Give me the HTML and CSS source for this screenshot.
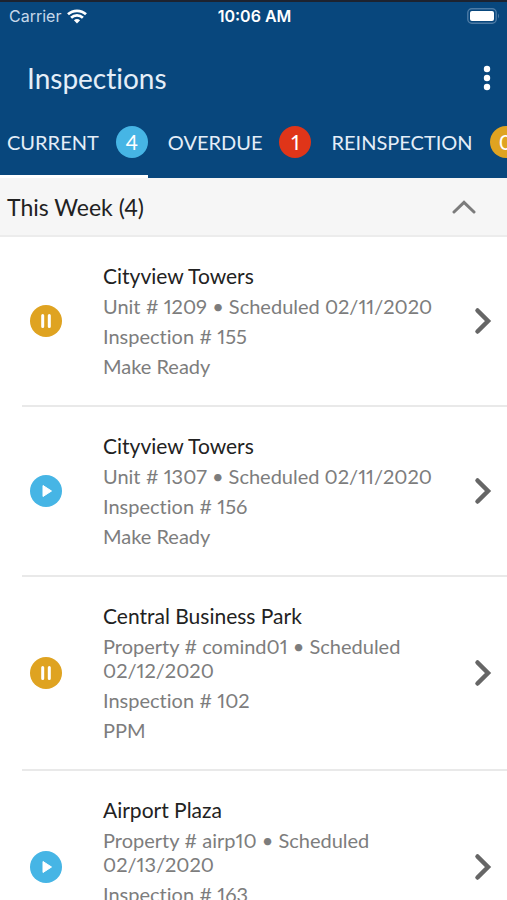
FILE: index.html
```html
<!DOCTYPE html>
<html lang="en">
<head>
<meta charset="utf-8">
<meta name="viewport" content="width=device-width, initial-scale=1">
<title>Inspections</title>
<link rel="stylesheet" href="styles.css">
</head>
<body>
<header class="header">
  <div class="status">
    <span class="carrier">Carrier
      <svg width="20" height="15" viewBox="0 0 20 15" fill="none" stroke="#fff" stroke-width="2.7" aria-hidden="true"><path d="M1 5.3C6 .6 14 .6 19 5.3M4.1 8.8C7.4 5.6 12.6 5.6 15.9 8.8"/><path d="M10 14.4 6.9 11.3Q10 8.8 13.1 11.3Z" fill="#fff" stroke="none"/></svg>
    </span>
    <time class="clock">10:06 AM</time>
    <svg class="battery" width="33" height="16" viewBox="0 0 33 16" aria-hidden="true"><rect x=".8" y=".8" width="28.4" height="14.4" rx="4" fill="none" stroke="#4d7ba5" stroke-width="1.4"/><rect x="3" y="3" width="24" height="10" rx="2" fill="#fff"/><path d="M31 5.5Q33 8 31 10.500Z" fill="#4d7ba5"/></svg>
  </div>
  <div class="titlebar">
    <h1 class="title">Inspections</h1>
    <button class="menu" type="button" aria-label="More options"><svg width="8" height="26" viewBox="0 0 8 26" fill="#fff"><circle cx="4" cy="4" r="3.200"/><circle cx="4" cy="13" r="3.200"/><circle cx="4" cy="22" r="3.200"/></svg></button>
  </div>
  <nav class="tabs">
    <a class="tab active" href="#current">CURRENT <span class="badge blue">4</span></a>
    <a class="tab" href="#overdue">OVERDUE <span class="badge red">1</span></a>
    <a class="tab" href="#reinspection">REINSPECTION <span class="badge amber">0</span></a>
  </nav>
</header>
<main>
  <button class="group" type="button" aria-expanded="true">This Week (4)
    <svg width="24" height="14" viewBox="0 0 24 14" fill="none" stroke="#7c7c7c" stroke-width="3" stroke-linecap="round" aria-hidden="true"><path d="M2 12 12 2.300 22 12"/></svg>
  </button>
  <ul class="list">
    <li><a class="row" href="#155">
      <svg class="state" viewBox="0 0 32 32" aria-hidden="true"><circle cx="16" cy="16" r="16" fill="#dfa321"/><path d="M12.700 10.500v11M19.300 10.500v11" stroke="#fff" stroke-width="3" stroke-linecap="round"/></svg>
      <div class="info"><h2>Cityview Towers</h2><p>Unit # 1209 • Scheduled 02/11/2020</p><p>Inspection # 155</p><p>Make Ready</p></div>
      <svg class="next" viewBox="0 0 18 28" aria-hidden="true"><path d="M3.500 3.500 14 14 3.500 24.500"/></svg>
    </a></li>
    <li><a class="row" href="#156">
      <svg class="state" viewBox="0 0 32 32" aria-hidden="true"><circle cx="16" cy="16" r="16" fill="#46b5e5"/><path d="M13 10.500 21.500 16 13 21.500Z" fill="#fff" stroke="#fff" stroke-linejoin="round"/></svg>
      <div class="info"><h2>Cityview Towers</h2><p>Unit # 1307 • Scheduled 02/11/2020</p><p>Inspection # 156</p><p>Make Ready</p></div>
      <svg class="next" viewBox="0 0 18 28" aria-hidden="true"><path d="M3.500 3.500 14 14 3.500 24.500"/></svg>
    </a></li>
    <li><a class="row" href="#102">
      <svg class="state" viewBox="0 0 32 32" aria-hidden="true"><circle cx="16" cy="16" r="16" fill="#dfa321"/><path d="M12.700 10.500v11M19.300 10.500v11" stroke="#fff" stroke-width="3" stroke-linecap="round"/></svg>
      <div class="info"><h2>Central Business Park</h2><p>Property # comind01 • Scheduled 02/12/2020</p><p>Inspection # 102</p><p>PPM</p></div>
      <svg class="next" viewBox="0 0 18 28" aria-hidden="true"><path d="M3.500 3.500 14 14 3.500 24.500"/></svg>
    </a></li>
    <li><a class="row" href="#163">
      <svg class="state" viewBox="0 0 32 32" aria-hidden="true"><circle cx="16" cy="16" r="16" fill="#46b5e5"/><path d="M13 10.500 21.500 16 13 21.500Z" fill="#fff" stroke="#fff" stroke-linejoin="round"/></svg>
      <div class="info"><h2>Airport Plaza</h2><p>Property # airp10 • Scheduled 02/13/2020</p><p>Inspection # 163</p><p>PPM</p></div>
      <svg class="next" viewBox="0 0 18 28" aria-hidden="true"><path d="M3.500 3.500 14 14 3.500 24.500"/></svg>
    </a></li>
  </ul>
</main>
</body>
</html>
```
FILE: styles.css
```css
* { box-sizing: border-box; }
html { height: 100%; overflow: hidden; }
body {
  height: 100%;
  margin: 0;
  overflow: hidden auto;
  scrollbar-width: none;
  background: #fff;
  color: #222;
  font: 20px/24px Lato, sans-serif;
  font-variant-ligatures: none;
  font-variant-numeric: proportional-nums;
}
h1, h2, p, ul { margin: 0; padding: 0; font-weight: 400; }
a { color: inherit; text-decoration: none; }
button { border: 0; padding: 0; background: none; color: inherit; font: inherit; }
svg { display: block; flex: none; }

.header { border-top: 2px solid #1d2330; background: #08477d; color: #e4eef8; }
.status {
  display: grid;
  grid-template-columns: 1fr auto 1fr;
  align-items: center;
  height: 28px;
  padding: 0 7px 0 9px;
  font: 16px/20px Inter, sans-serif;
}
.carrier { display: flex; align-items: center; gap: 6px; color: #c5d8ea; }
.clock { color: #fff; font-weight: 600; }
.battery { justify-self: end; }
.titlebar {
  display: flex;
  align-items: center;
  justify-content: space-between;
  height: 88px;
  padding: 8px 16px 0 27px;
}
.title { font-size: 28px; line-height: 32px; }
.tabs { display: flex; gap: 20px; height: 60px; padding-left: 7px; overflow: hidden; }
.tab {
  display: flex;
  flex: none;
  gap: 17px;
  height: 60px;
  padding-top: 8px;
  line-height: 32px;
  white-space: nowrap;
}
.active { margin-left: -7px; padding-left: 7px; border-bottom: 3px solid #fff; }
.badge { width: 32px; height: 32px; border-radius: 50%; color: #fff; font-size: 21px; text-align: center; }
.blue { background: #46b5e5; }
.red { background: #df3519; }
.amber { background: #dfa321; }

.group {
  display: flex;
  align-items: center;
  justify-content: space-between;
  width: 100%;
  height: 59px;
  padding: 0 31px 0 7px;
  border-bottom: 2px solid #ececec;
  background: #f6f6f6;
  font-size: 23px;
}
.list { list-style: none; }
.list li { margin-left: 22px; border-bottom: 2px solid #e9e9e9; }
.row { display: flex; align-items: center; padding: 27px 15px 27px 8px; }
.state { width: 32px; height: 32px; margin-right: 41px; }
.info { display: grid; flex: 1; gap: 6px; padding-right: 28px; color: #7d7d7d; }
.info h2 { color: #222; font-size: 21px; line-height: 24px; }
.next { width: 18px; height: 28px; fill: none; stroke: #666; stroke-width: 4.500; stroke-linecap: round; }
```
